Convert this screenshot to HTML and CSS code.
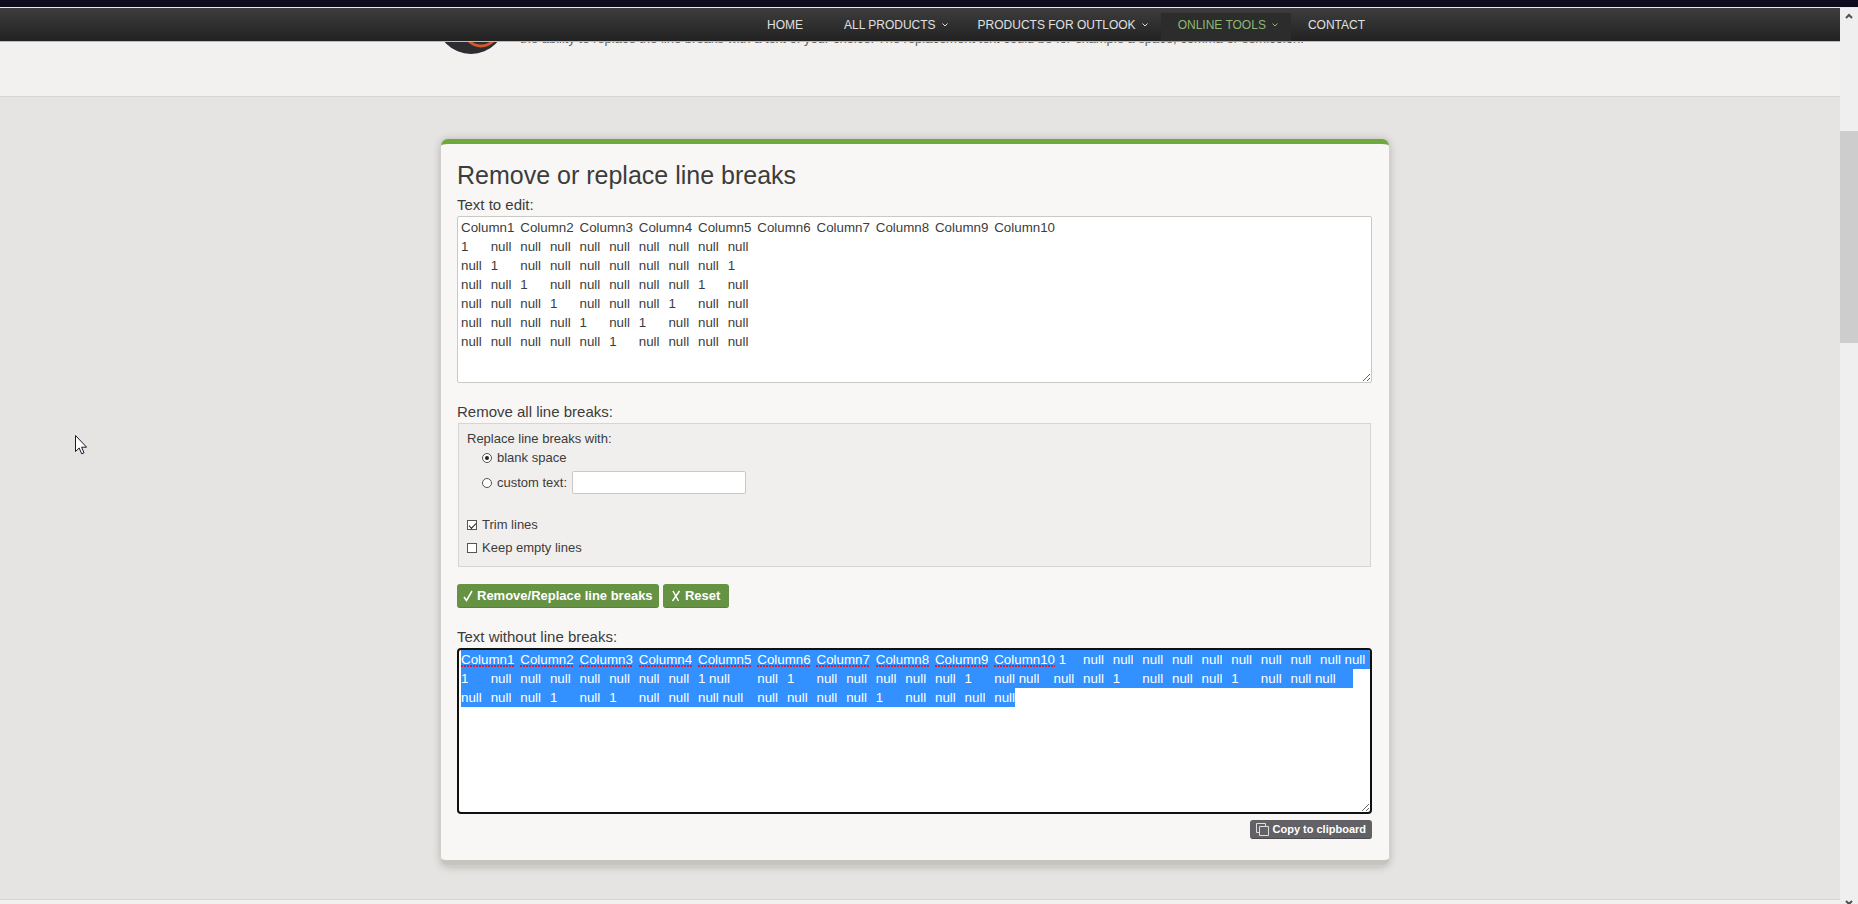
FILE: index.html
```html
<!DOCTYPE html>
<html lang="en">
<head>
<meta charset="utf-8">
<title>Remove or replace line breaks</title>
<link rel="stylesheet" href="styles.css">
</head>
<body>
<div class="window-edge"></div>
<div class="viewport">
  <div class="page">
    <header class="topbar">
      <nav class="nav container">
        <a class="nav-link" href="#">HOME</a>
        <a class="nav-link has-menu" href="#">ALL PRODUCTS <svg class="chevron" viewBox="0 0 6 4"><path d="M.5.5 3 3 5.5.5"/></svg></a>
        <a class="nav-link has-menu" href="#">PRODUCTS FOR OUTLOOK <svg class="chevron" viewBox="0 0 6 4"><path d="M.5.5 3 3 5.5.5"/></svg></a>
        <a class="nav-link has-menu active" href="#">ONLINE TOOLS <svg class="chevron" viewBox="0 0 6 4"><path d="M.5.5 3 3 5.5.5"/></svg></a>
        <a class="nav-link" href="#">CONTACT</a>
      </nav>
    </header>

    <section class="intro">
      <div class="container intro-row">
        <svg class="logo" viewBox="0 0 70 70" aria-hidden="true">
          <circle cx="35" cy="35" r="35" fill="#2d2d31"/>
          <circle cx="45" cy="45" r="17" fill="none" stroke="#cf5a2e" stroke-width="3"/>
          <circle cx="45" cy="43" r="12" fill="none" stroke="#cf5a2e" stroke-width="3"/>
        </svg>
        <p class="intro-text">the ability to replace the line breaks with a text of your choice. The replacement text could be for example a space, comma or semicolon.</p>
      </div>
    </section>

    <main class="tool-area">
      <form class="card">
        <h1 class="title">Remove or replace line breaks</h1>
        <label class="field-label" for="source">Text to edit:</label>
        <textarea class="text-area" id="source" spellcheck="false">Column1	Column2	Column3	Column4	Column5	Column6	Column7	Column8	Column9	Column10
1	null	null	null	null	null	null	null	null	null
null	1	null	null	null	null	null	null	null	1
null	null	1	null	null	null	null	null	1	null
null	null	null	1	null	null	null	1	null	null
null	null	null	null	1	null	1	null	null	null
null	null	null	null	null	1	null	null	null	null</textarea>

        <div class="field-label spaced" id="options-label">Remove all line breaks:</div>
        <div class="options" role="group" aria-labelledby="options-label">
          <div class="row">Replace line breaks with:</div>
          <div class="row indent">
            <input class="radio" type="radio" name="mode" id="blank" checked>
            <label for="blank">blank space</label>
          </div>
          <div class="row indent custom">
            <input class="radio" type="radio" name="mode" id="custom">
            <label for="custom">custom text:</label>
            <input class="text-input" type="text" aria-label="custom text">
          </div>
          <div class="row trim">
            <input class="check" type="checkbox" id="trim" checked>
            <label for="trim">Trim lines</label>
          </div>
          <div class="row keep">
            <input class="check" type="checkbox" id="keep">
            <label for="keep">Keep empty lines</label>
          </div>
        </div>

        <div class="actions">
          <button class="button" type="button"><svg class="mark" viewBox="0 0 10 12"><path d="M1 7 3.5 10.5 9 1"/></svg>Remove/Replace line breaks</button>
          <button class="button" type="button"><svg class="mark" viewBox="0 0 10 12"><path d="M2 1 7.500 11M8.500 1 1.500 11"/></svg>Reset</button>
        </div>

        <label class="field-label spaced" for="result">Text without line breaks:</label>
        <div class="result-wrap">
          <textarea class="text-area result" id="result" spellcheck="false">Column1	Column2	Column3	Column4	Column5	Column6	Column7	Column8	Column9	Column10 1	null	null	null	null	null	null	null	null	null null	1	null	null	null	null	null	null	null	1 null	null	1	null	null	null	null	null	1	null null	null	null	1	null	null	null	1	null	null null	null	null	null	1	null	1	null	null	null null	null	null	null	null	1	null	null	null	null</textarea>
          <svg class="squiggles" viewBox="0 0 600 2" aria-hidden="true">
            <path d="M0 1h53M59 1h53M118 1h53M178 1h53M237 1h53M296 1h53M355 1h53M415 1h53M474 1h53M533 1h61"/>
          </svg>
        </div>

        <div class="copy-row">
          <button class="copy" type="button"><svg class="copy-icon" viewBox="0 0 13 13"><path d="M3 9.500H.5V.5h9V3M3.500 3.500h9v9h-9z"/></svg>Copy to clipboard</button>
        </div>
      </form>
    </main>
    <footer class="footer"></footer>
  </div>

  <div class="scrollbar" aria-hidden="true">
    <svg class="arrow" viewBox="0 0 8 6"><path d="M1 5 4 2 7 5"/></svg>
    <div class="thumb"></div>
    <svg class="arrow end" viewBox="0 0 8 6"><path d="M1 1 4 4 7 1"/></svg>
  </div>
</div>

<svg class="cursor" viewBox="0 0 12 20" aria-hidden="true"><path d="M.5.5v16l3.700-3.500 2.500 5.800 2.300-1-2.400-5.600h5z"/></svg>
<script src="app.js"></script>
</body>
</html>
```
FILE: styles.css
```css
* {
  box-sizing: border-box;
}

body {
  margin: 0;
  height: 100vh;
  display: flex;
  flex-direction: column;
  overflow: hidden;
  background: #e5e4e2;
  color: #3c3c3c;
  font-family: "Liberation Sans", Arial, sans-serif;
  font-size: 13px;
  line-height: 19px;
}

.window-edge {
  flex: none;
  height: 8px;
  background: #0f0b1d;
  border-bottom: 1px solid #e8e8e8;
}

.viewport {
  flex: 1;
  min-height: 0;
  display: flex;
}

.page {
  flex: 1;
  min-width: 0;
  overflow: hidden;
  display: flex;
  flex-direction: column;
}

.container {
  width: 100%;
  max-width: 948px;
  margin: 0 auto;
}

.topbar {
  flex: none;
  position: sticky;
  top: 0;
  z-index: 2;
  height: 34px;
  padding-right: 10px;
  background: linear-gradient(#3d3d3d, #222);
  border-bottom: 1px solid #bcbcbc;
}

.nav {
  display: flex;
  justify-content: flex-end;
  align-items: flex-end;
  height: 33px;
}

.nav-link {
  display: flex;
  align-items: center;
  gap: 6px;
  height: 28px;
  padding: 0 24px 4px 17px;
  color: #e0e0e0;
  font-size: 12px;
  text-decoration: none;
}

.has-menu {
  padding-right: 13px;
}

.active {
  background: #2c2c2c;
  color: #8fb873;
  box-shadow: 0 1px #8fae78;
}

.chevron {
  width: 6px;
  height: 4px;
  fill: none;
  stroke: currentColor;
}

.intro {
  flex: none;
  margin-top: -60px;
  height: 115px;
  padding: 2px 10px 0 0;
  background: #f3f1ef;
  border-bottom: 1px solid #d6d5d3;
}

.intro-row {
  display: flex;
  align-items: flex-end;
}

.logo {
  flex: none;
  width: 70px;
  height: 70px;
  margin-left: -5px;
}

.intro-text {
  margin: 0 0 6px 14px;
  color: #606060;
  font-size: 13px;
  white-space: nowrap;
}

.tool-area {
  flex: none;
  padding: 42px 10px 34px 0;
  background: #e5e4e2;
  border-bottom: 1px solid #d6d5d3;
}

.card {
  width: 100%;
  max-width: 948px;
  margin: 0 auto;
  padding: 16px 17px 21px 16px;
  background: #f8f7f5;
  border-top: 5px solid #6fa93c;
  border-bottom: 5px solid #c7c3be;
  border-radius: 7px;
  box-shadow: 0 0 1px 1px #d3d1cb, 0 1px 8px rgba(0, 0, 0, .25);
}

.title {
  margin: 0 0 6px;
  font-size: 25px;
  font-weight: 400;
  line-height: 30px;
}

.field-label {
  display: block;
  margin-bottom: 2px;
  font-size: 15px;
  line-height: 18px;
}

.spaced {
  margin-top: 20px;
}

.text-area {
  display: block;
  width: 100%;
  height: 167px;
  margin: 0;
  padding: 1px 3px;
  border: 1px solid #cbc9c3;
  border-radius: 2px;
  background: #fff;
  color: #3c3c3c;
  font-family: "Liberation Sans", Arial, sans-serif;
  line-height: 19px;
  outline: none;
}

.options {
  margin: 0 1px;
  padding: 5px 8px 9px;
  background: #f0efed;
  border: 1px solid #d6d5d3;
}

.row {
  display: flex;
  align-items: center;
  gap: 5px;
  min-height: 19px;
}

.indent {
  padding-left: 15px;
}

.custom {
  margin-top: 4px;
}

.trim {
  margin-top: 21px;
}

.keep {
  margin-top: 4px;
}

.radio,
.check {
  appearance: none;
  display: grid;
  place-items: center;
  width: 10px;
  height: 10px;
  margin: 0;
  background: #fff;
  border: 1px solid #555;
}

.radio {
  border-radius: 50%;
}

.radio:checked::before {
  content: "";
  width: 4px;
  height: 4px;
  border-radius: 50%;
  background: #222;
}

.check:checked::before {
  content: "";
  width: 6px;
  height: 3px;
  border: solid #222;
  border-width: 0 0 1px 1px;
  transform: rotate(-45deg);
}

.text-input {
  width: 174px;
  height: 23px;
  padding: 2px 3px;
  border: 1px solid #cbc9c3;
  border-radius: 2px;
  background: #fff;
  font: inherit;
}

.actions {
  display: flex;
  gap: 4px;
  margin-top: 17px;
}

.button {
  display: flex;
  align-items: center;
  justify-content: center;
  gap: 4px;
  min-width: 66px;
  height: 24px;
  padding: 0 6px;
  border: 0;
  border-bottom: 1px solid #55833a;
  border-radius: 3px;
  background: #669244;
  color: #fff;
  font: bold 13px "Liberation Sans", Arial, sans-serif;
}

.mark {
  width: 10px;
  height: 12px;
  fill: none;
  stroke: currentColor;
  stroke-width: 1.5;
}

.result-wrap {
  position: relative;
}

.result {
  height: 166px;
  padding: 0 2px;
  border: 2px solid #101010;
  border-radius: 4px;
}

.result::selection {
  background: #3390ff;
  color: #fff;
}

.squiggles {
  position: absolute;
  left: 4px;
  top: 17px;
  width: 600px;
  height: 2px;
  fill: none;
  stroke: #d0213c;
  stroke-width: 2;
  stroke-dasharray: 2 1;
  pointer-events: none;
}

.copy-row {
  display: flex;
  justify-content: flex-end;
  margin-top: 6px;
}

.copy {
  display: flex;
  align-items: center;
  gap: 4px;
  height: 19px;
  padding: 0 6px;
  border: 0;
  border-bottom: 1px solid #4c4b50;
  border-radius: 3px;
  background: #626166;
  color: #fff;
  font: bold 11px "Liberation Sans", Arial, sans-serif;
}

.copy-icon {
  width: 13px;
  height: 13px;
  fill: none;
  stroke: #ddd;
}

.footer {
  flex: 1;
  background: #f3f1ef;
}

.scrollbar {
  flex: none;
  display: flex;
  flex-direction: column;
  align-items: center;
  width: 18px;
  padding-top: 5px;
  background: #efefef;
  overflow: hidden;
}

.arrow {
  flex: none;
  width: 8px;
  height: 6px;
  fill: none;
  stroke: #505050;
  stroke-width: 2;
}

.thumb {
  flex: none;
  width: 100%;
  height: 212px;
  margin-top: 112px;
  background: #cdcdcd;
}

.end {
  margin-top: auto;
  margin-bottom: -2px;
}

.cursor {
  position: absolute;
  left: 75px;
  top: 435px;
  width: 12px;
  height: 20px;
  fill: #fff;
  stroke: #1a1a2a;
}
```
FILE: app.js
```js
const result = document.getElementById("result");
result.focus({ preventScroll: true });
result.select();
```
